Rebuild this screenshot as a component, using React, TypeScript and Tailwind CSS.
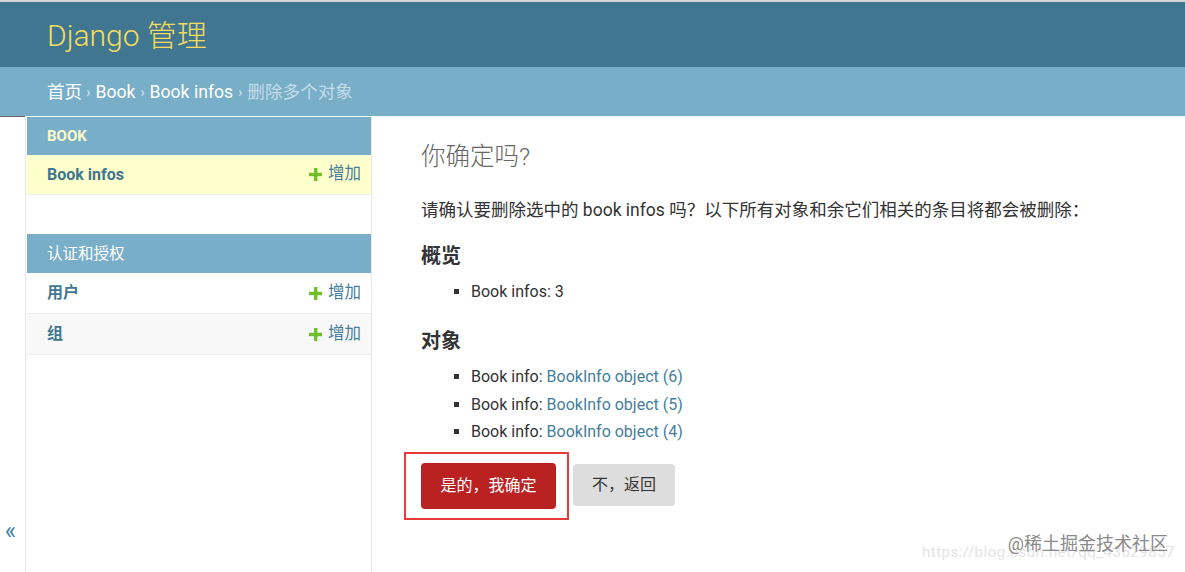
import React from "react";

const font = "font-['Roboto','Noto_Sans_CJK_SC',sans-serif]";

function Plus() {
  return (
    <svg width="13" height="13" viewBox="0 0 13 13" className="shrink-0">
      <rect x="5" y="0" width="3.4" height="13" fill="#70bf2b" />
      <rect x="0" y="4.8" width="13" height="3.4" fill="#70bf2b" />
    </svg>
  );
}

function Row({ label, bg, bold, h }: { label: string; bg: string; bold?: boolean; h: string }) {
  return (
    <div className={`flex items-center justify-between pl-[20px] pr-[10px] border-b border-[#ededed] ${bg} ${h}`}>
      <span className={`text-[16px] text-[#417690] ${bold ? "font-bold" : "font-semibold"}`}>{label}</span>
      <span className="flex items-center gap-[6px] text-[16.5px] text-[#447e9b]">
        <Plus />
        增加
      </span>
    </div>
  );
}

export default function App() {
  const objects = [6, 5, 4];
  return (
    <div className={`w-[1185px] h-[572px] overflow-hidden bg-white flex flex-col relative ${font}`}>
      <div className="h-[2px] bg-[#d4d4d4]" />
      <div className="h-[65px] bg-[#417690] flex items-center px-[47px] pt-[3px]">
        <h1 className="text-[30px] font-light text-[#f5dd5d] leading-none">Django 管理</h1>
      </div>
      <div className="h-[49px] bg-[#79aec8] flex items-center px-[47px] pt-[2px] text-[17.6px] text-white">
        <span>首页</span>
        <span className="pl-[4px] pr-[5px] text-[#d8e8f0] text-[14px]">›</span>
        <span>Book</span>
        <span className="pl-[5px] pr-[5px] text-[#d8e8f0] text-[14px]">›</span>
        <span>Book infos</span>
        <span className="pl-[5px] pr-[5px] text-[#d8e8f0] text-[14px]">›</span>
        <span className="text-[#c4dce8]">删除多个对象</span>
      </div>

      <div className="flex flex-1">
        <div className="w-[26px] border-r border-[#e8e8e8] flex flex-col">
          <div className="h-px bg-[#666]" />
          <div className="flex-1 flex flex-col justify-end items-center pb-[29px] pr-[4px]">
            <span className="text-[#447e9b] text-[24px] leading-none">«</span>
          </div>
        </div>

        <div className="w-[346px] border-r border-[#e8e8e8] pl-px pt-px">
          <div className="h-[38px] bg-[#79aec8] flex items-center pl-[20px]">
            <span className="text-[15px] font-bold text-[#fafac8]">BOOK</span>
          </div>
          <Row label="Book infos" bg="bg-[#ffffcc]" bold h="h-[40px]" />
          <div className="h-[39px]" />
          <div className="h-[39px] bg-[#79aec8] flex items-center pl-[20px] pt-[3px]">
            <span className="text-[15.5px] text-white">认证和授权</span>
          </div>
          <Row label="用户" bg="bg-white" h="h-[41px]" />
          <Row label="组" bg="bg-[#f8f8f8]" h="h-[41px]" />
        </div>

        <div className="flex-1 pl-[49px] pt-[26px] text-[#333]">
          <h1 className="text-[24.5px] font-light text-[#666] leading-[29px]">你确定吗?</h1>
          <p className="mt-[26px] text-[17.5px] leading-[26px] text-[#333]">
            请确认要删除选中的 book infos 吗？以下所有对象和余它们相关的条目将都会被删除：
          </p>
          <h2 className="mt-[20px] text-[20px] font-bold leading-[26px] text-[#333]">概览</h2>
          <ul className="mt-[9px] list-[square] pl-[50px] text-[16px] leading-[28px]">
            <li>Book infos: 3</li>
          </ul>
          <h2 className="mt-[22px] text-[20px] font-bold leading-[26px] text-[#333]">对象</h2>
          <ul className="mt-[9px] list-[square] pl-[50px] text-[16px] leading-[27.5px]">
            {objects.map((n) => (
              <li key={n}>
                Book info: <span className="text-[#447e9b]">BookInfo object ({n})</span>
              </li>
            ))}
          </ul>
          <div className="mt-[17px] flex items-start gap-[17px]">
            <div className="relative">
              <button className="h-[46px] w-[135px] rounded-[4px] bg-[#ba2121] text-white text-[16px]">
                是的，我确定
              </button>
              <div className="absolute -left-[17px] -top-[11px] -right-[13px] -bottom-[11px] border-2 border-[#e8393b] pointer-events-none" />
            </div>
            <button className="mt-px h-[42px] w-[102px] rounded-[4px] bg-[#dddddd] text-[#333] text-[16px]">
              不，返回
            </button>
          </div>
        </div>
      </div>

      <div className="absolute right-[10px] bottom-[12px] text-[15px] text-[#e4e4e4] leading-none tracking-[0.5px]">
        https://blog.csdn.net/qq_43629857
      </div>
      <div className="absolute right-[17px] bottom-[19px] text-[18px] text-[#8a8a8a] leading-none">
        @稀土掘金技术社区
      </div>
    </div>
  );
}
